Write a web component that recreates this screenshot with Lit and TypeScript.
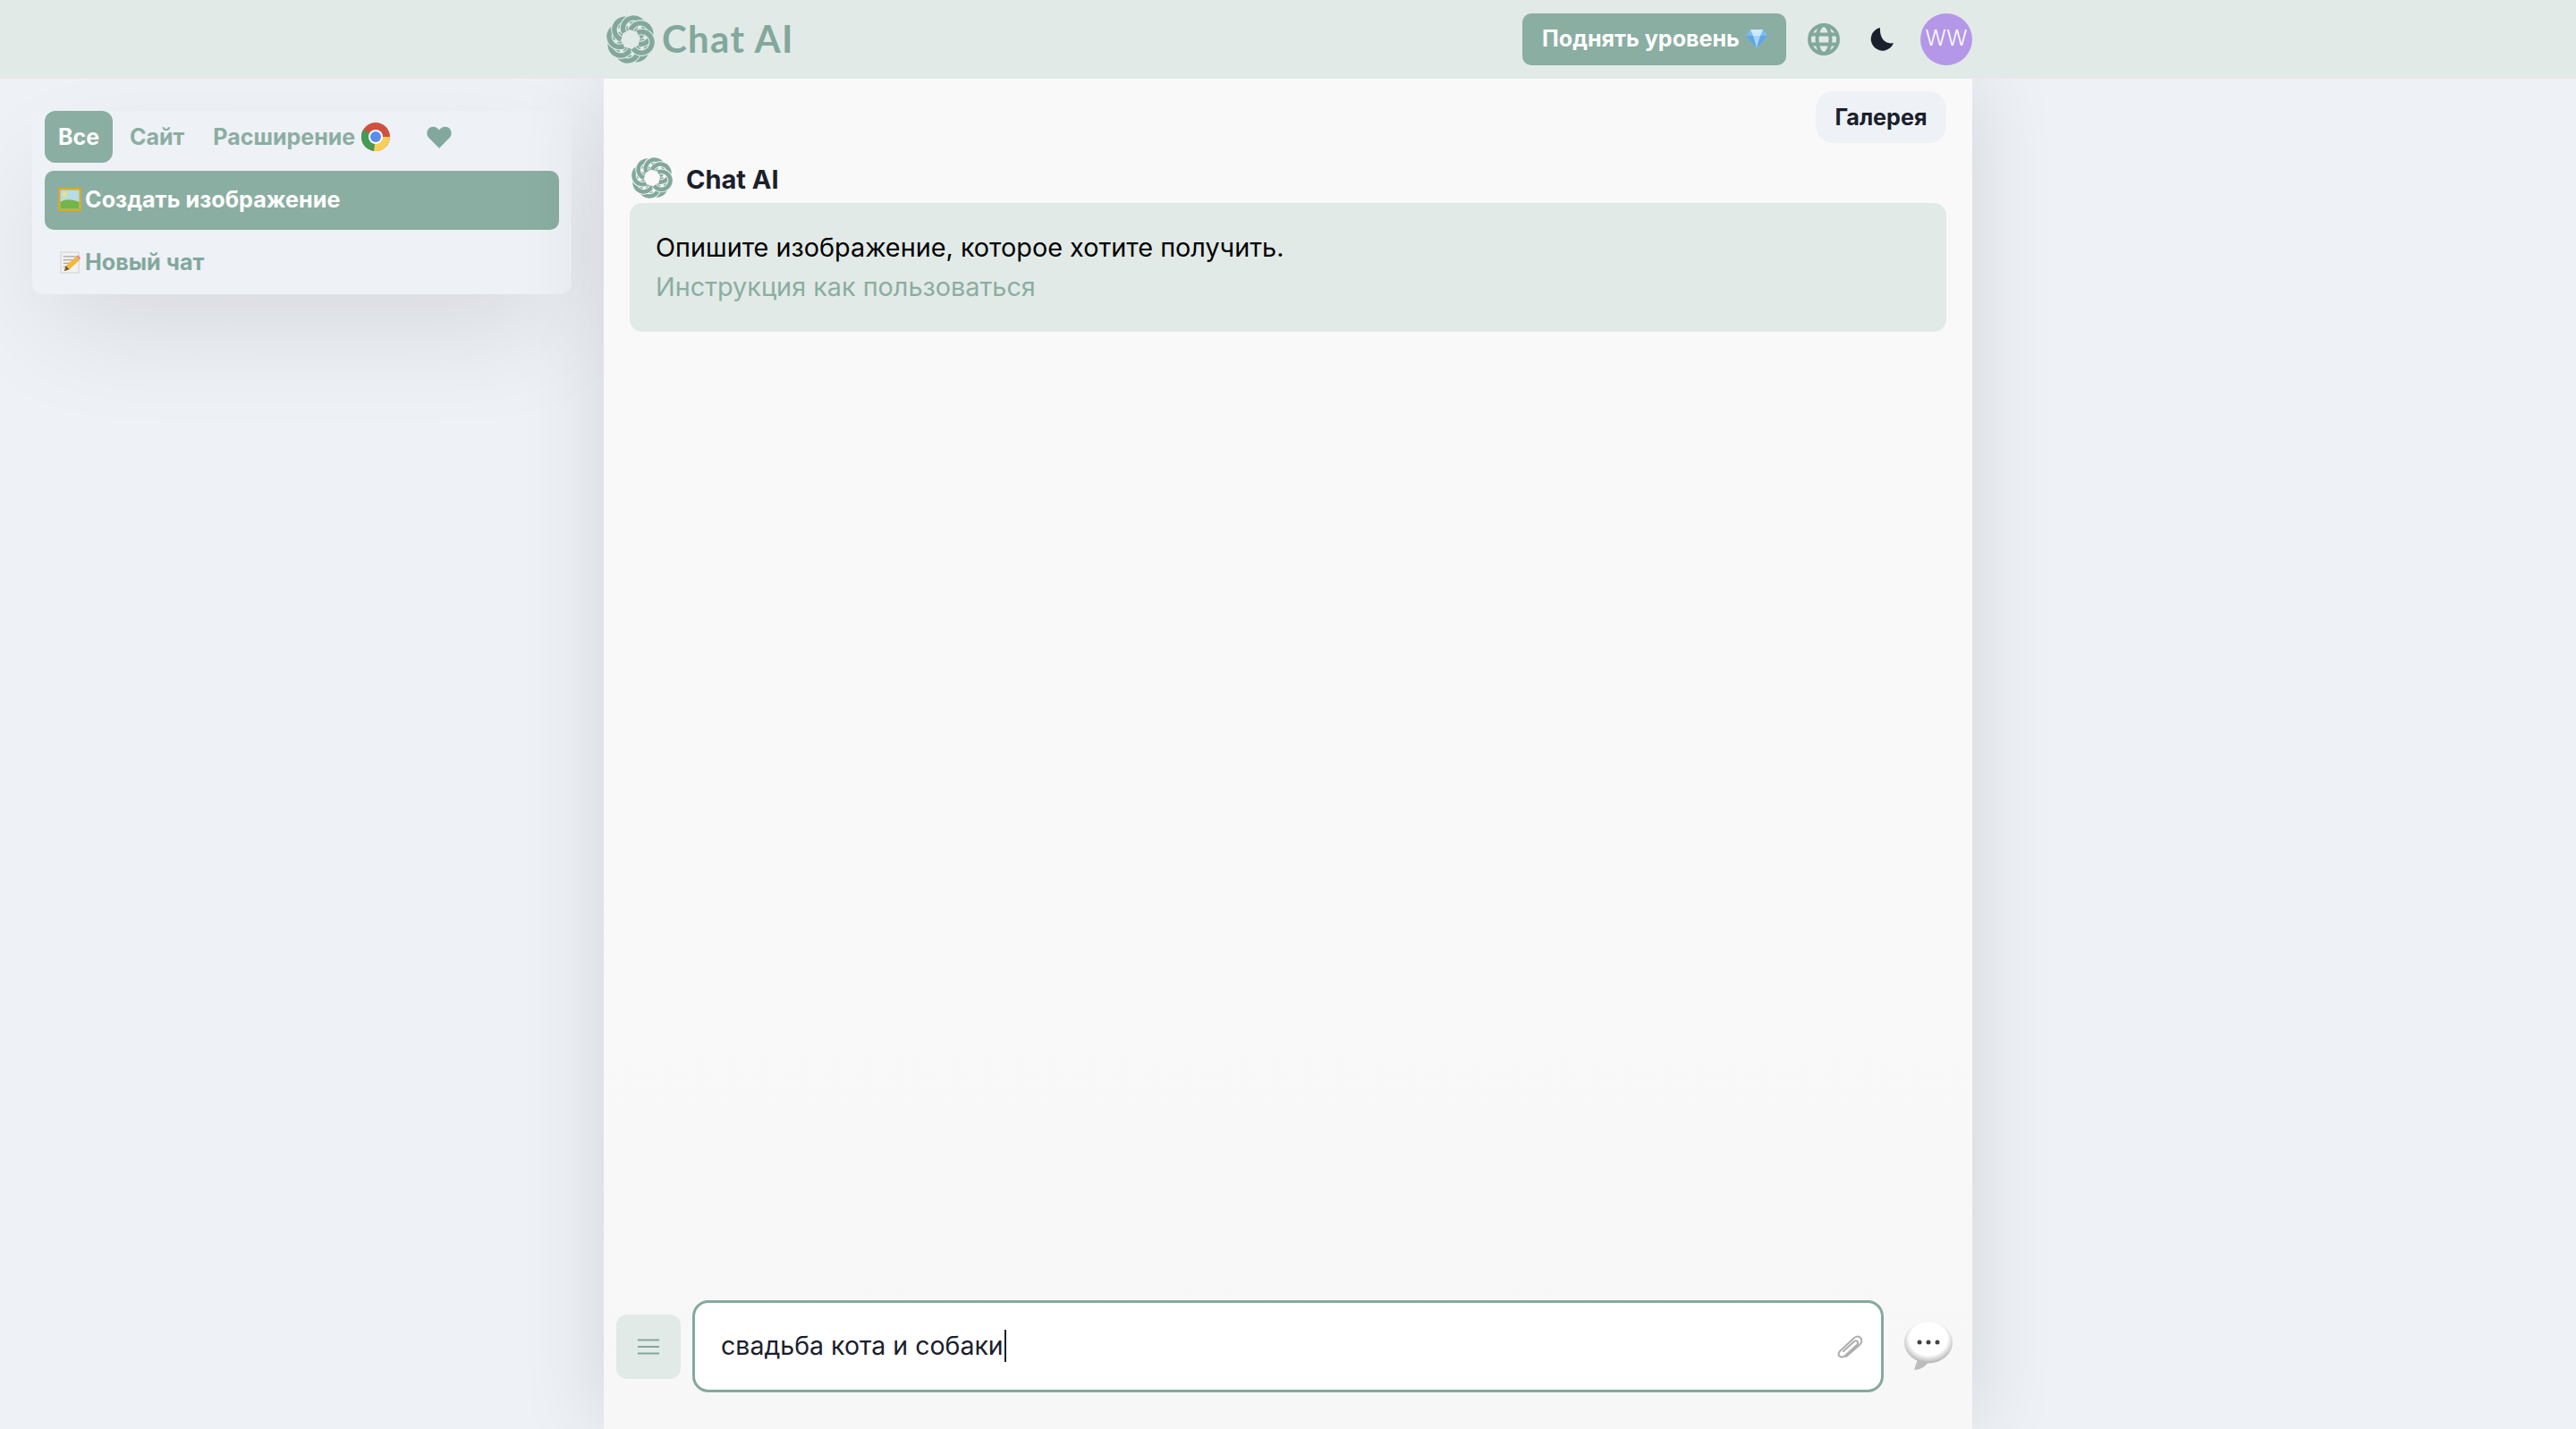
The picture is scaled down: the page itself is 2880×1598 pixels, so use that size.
import { LitElement, html, css, svg } from "lit";
import { customElement } from "lit/decorators.js";

const petals = [0, 45, 90, 135, 180, 225, 270, 315];
const PETAL = "M37.5 27A11.77 11.77 0 1 1 21.75 36.09";
const logo = (cls: string) => html`<svg class="knot ${cls}" viewBox="0 0 54 54">
  ${petals.map((a) => svg`<g transform="rotate(${a} 27 27)">
    <path class="under" d=${PETAL}/>
    <path class="over" d=${PETAL}/>
  </g>`)}
</svg>`;

@customElement("app-root")
export class AppRoot extends LitElement {
  static styles = css`
    :host { display: block; height: 1598px; overflow: hidden; background: #eef1f6; font-family: Inter, "Noto Sans", sans-serif; color: #1a202c; }
    * { box-sizing: border-box; }
    .header { height: 88px; background: #e2eae7; display: grid; grid-template-columns: 1fr 1530px 1fr; position: relative; z-index: 2; }
    .hbar { grid-column: 2; display: flex; align-items: center; padding-left: 3px; }
    .knot { display: block; fill: none; --gap: #e2eae7; }
    .knot .under { stroke: var(--gap); stroke-width: 7.6; fill: none; }
    .knot .over { stroke: #82a89c; stroke-width: 5.4; fill: none; }
    .knot.big { width: 54px; height: 54px; }
    .knot.small { width: 46px; height: 46px; --gap: #f9f9f9; }
    .brand { margin-left: 8px; font: 700 42px/1 Lato, sans-serif; color: #82a89c; letter-spacing: 1.3px; padding-bottom: 2px; }
    .spacer { flex: 1; }
    .upgrade { width: 295px; height: 58px; border-radius: 10px; background: #8aaea1; color: #fff; font-size: 25.1px; font-weight: 700; display: flex; align-items: center; gap: 6px; padding-left: 22px; padding-bottom: 2px; }
    .globe { width: 36px; height: 36px; margin-left: 24px; display: block; }
    .moon { width: 28px; height: 28px; margin-left: 33px; display: block; }
    .avatar { width: 58px; height: 58px; border-radius: 50%; background: #b497e8; color: #fff; font-size: 24px; font-weight: 300; display: flex; align-items: center; justify-content: center; margin-left: 29px; padding-bottom: 3px; }
    .page { display: grid; grid-template-columns: 1fr 1530px 1fr; height: 1510px; }
    .left { padding: 36px 0 0 36px; }
    .card { width: 603px; height: 205px; border-radius: 12px; background: #eef1f6; box-shadow: 0 50px 130px -20px rgba(0, 0, 0, 0.11); padding: 0 14px; }
    .tabs { display: flex; align-items: center; height: 58px; font-size: 25px; font-weight: 700; color: #8aaea1; }
    .tab { height: 58px; display: flex; align-items: center; }
    .tab.on { width: 76px; justify-content: center; background: #8aaea1; color: #fff; border-radius: 12px; }
    .t2 { margin-left: 19px; }
    .t3 { margin-left: 32px; gap: 7px; }
    .heart { width: 28px; height: 25px; margin-left: 41px; display: block; }
    .item { height: 66px; border-radius: 10px; display: flex; align-items: center; padding-left: 15px; gap: 4px; font-size: 25.2px; font-weight: 700; color: #82a89c; padding-bottom: 2px; }
    .item.on { background: #8aaea1; color: #fff; margin-top: 9px; }
    .item.next { margin-top: 3px; padding-left: 17px; gap: 5px; padding-bottom: 0; }
    .main { background: linear-gradient(#f9f9f9 60%, #f7f7f7); box-shadow: 0 0 90px rgba(0, 0, 0, 0.12); display: flex; flex-direction: column; padding: 14px 15px 41px 14px; position: relative; }
    .topr { display: flex; justify-content: flex-end; margin-right: 14px; }
    .gallery { width: 146px; height: 58px; border-radius: 20px; background: #eef1f6; font-size: 25.2px; font-weight: 700; display: flex; align-items: center; justify-content: center; }
    .who { display: flex; align-items: center; gap: 15px; margin: 17px 0 6px 17px; height: 44px; font-size: 29px; font-weight: 700; }
    .who span { padding-top: 3px; }
    .msg { margin: 0 14px 0 15px; height: 144px; border-radius: 14px; background: #e2eae7; padding: 28px 29px; font-size: 28.8px; line-height: 44px; color: #000; }
    .link { color: #8aaea1; }
    .fill { flex: 1; }
    .composer { display: flex; align-items: center; height: 103px; }
    .menu { width: 72px; height: 72px; border-radius: 12px; background: #e2eae7; display: flex; align-items: center; justify-content: center; }
    .menu svg { width: 26px; height: 20px; display: block; }
    .input { margin-left: 13px; flex: none; width: 1332px; height: 103px; border: 3px solid #85a99d; border-radius: 18px; background: #fff; display: flex; align-items: center; padding: 0 18px 2px 29px; font-size: 28.5px; color: #1a202c; }
    .caret { width: 2px; height: 36px; background: #1a202c; margin-left: 1px; }
    .clip { width: 32px; height: 32px; display: block; margin-left: auto; transform: translateY(2px); }
    .bubble { width: 56px; height: 58px; display: block; margin-left: 22px; flex: none; }
    .ic { display: block; flex: none; }
  `;

  render() {
    return html`
      <div class="header"><div class="hbar">
        ${logo("big")}
        <div class="brand">Chat AI</div>
        <div class="spacer"></div>
        <div class="upgrade">Поднять уровень
          <svg class="ic" width="26" height="24" viewBox="0 0 26 24">
            <path d="M6 2h14l5 7-12 14L1 9z" fill="#7dbcf2"/>
            <path d="M6 2h14l-3 7H9z" fill="#cfe8fc"/>
            <path d="M9 9h8l-4 14z" fill="#a5d5f9"/>
            <path d="M1 9h8l4 14zM17 9h8L13 23z" fill="#5ea5ea"/>
          </svg>
        </div>
        <svg class="globe" viewBox="0 0 36 36" fill="none" stroke="#82a89c" stroke-width="4">
          <circle cx="18" cy="18" r="16"/>
          <ellipse cx="18" cy="18" rx="7.500" ry="16"/>
          <path d="M3 12.500h30M3 23.500h30"/>
        </svg>
        <svg class="moon" viewBox="0 0 28 28"><path d="M12 1A13 13 0 1 0 27 18C20 20 11 15 12 1z" fill="#1a202c"/></svg>
        <div class="avatar">WW</div>
      </div></div>
      <div class="page">
        <div class="left">
          <div class="card">
            <div class="tabs">
              <div class="tab on">Все</div>
              <div class="tab t2">Сайт</div>
              <div class="tab t3">Расширение
                <svg class="ic" width="32" height="32" viewBox="0 0 32 32">
                  <circle cx="16" cy="16" r="16" fill="#d0503f"/>
                  <path d="M16 16L2.100 8A16 16 0 0 0 14 31.900z" fill="#459a55"/>
                  <path d="M16 16h16A16 16 0 0 1 14 31.900z" fill="#f8cf57"/>
                  <circle cx="16" cy="16" r="8" fill="#fff"/>
                  <circle cx="16" cy="16" r="6" fill="#5b8def"/>
                </svg>
              </div>
              <svg class="heart" viewBox="0 0 30 26"><path d="M15 26 2.500 13.500C-1 10 .2 4 3.500 1.800 7.500-.8 12.500 .5 15 4.500 17.500 .5 22.500-.8 26.500 1.800 29.800 4 31 10 27.500 13.500z" fill="#82a89c"/></svg>
            </div>
            <div class="item on">
              <svg class="ic" width="26" height="26" viewBox="0 0 26 26">
                <rect width="26" height="26" fill="#d4ab2c"/>
                <rect x="2.500" y="2.500" width="21" height="21" fill="#b6dbe9"/>
                <path d="M2.500 16c6-4 13-3 21 0v7.500h-21z" fill="#73b548"/>
                <circle cx="7.500" cy="7.500" r="2.500" fill="#f3e27a"/>
              </svg>
              Создать изображение
            </div>
            <div class="item next">
              <svg class="ic" width="23" height="25" viewBox="0 0 24 26">
                <rect x="1" y="1" width="21" height="24" fill="#f1f1f1" stroke="#cfcfcf"/>
                <path d="M4 6h15M4 10h15M4 14h9M4 18h6" stroke="#a8a8a8" stroke-width="1.300"/>
                <path d="M5 23l2-6L19 6l4 4-12 11z" fill="#f2b93b"/>
                <path d="M19 6l2-1.500 3 3-1 2.500z" fill="#e58a8a"/>
                <path d="M5 23l2-6 4 4z" fill="#6b5a3a"/>
              </svg>
              Новый чат
            </div>
          </div>
        </div>
        <div class="main">
          <div class="topr"><div class="gallery">Галерея</div></div>
          <div class="who">${logo("small")}<span>Chat AI</span></div>
          <div class="msg">
            <div>Опишите изображение, которое хотите получить.</div>
            <div class="link">Инструкция как пользоваться</div>
          </div>
          <div class="fill"></div>
          <div class="composer">
            <div class="menu"><svg viewBox="0 0 26 20" fill="none" stroke="#82a89c" stroke-width="2.200"><path d="M1 2.500h24M1 10h24M1 17.500h24"/></svg></div>
            <div class="input">свадьба кота и собаки<div class="caret"></div>
              <svg class="clip" viewBox="0 0 32 32" fill="none" stroke="#adadad" stroke-width="2" stroke-linecap="round">
                <path d="M11 26 26 13c3-3 3-6 1-8s-5-2-8 1L5 19c-3 3-3 5-1.500 6.500S8 27 10 25L23 13c1.500-1.500 1.500-3 .5-4s-2.500-1-4 .5L8 20"/>
              </svg>
            </div>
            <svg class="bubble" viewBox="0 0 56 58">
              <defs><radialGradient id="bg" cx="50%" cy="42%" r="56%"><stop offset="70%" stop-color="#fff"/><stop offset="100%" stop-color="#b9b9b9"/></radialGradient></defs>
              <path d="M17 40 12 55c7 0 13-4 17-10z" fill="#bdbdbd"/>
              <ellipse cx="28" cy="24" rx="27" ry="23.500" fill="url(#bg)"/>
              <circle cx="18" cy="24" r="2.500" fill="#444"/><circle cx="28" cy="24" r="2.500" fill="#444"/><circle cx="38" cy="24" r="2.500" fill="#444"/>
            </svg>
          </div>
        </div>
        <div></div>
      </div>
    `;
  }
}
